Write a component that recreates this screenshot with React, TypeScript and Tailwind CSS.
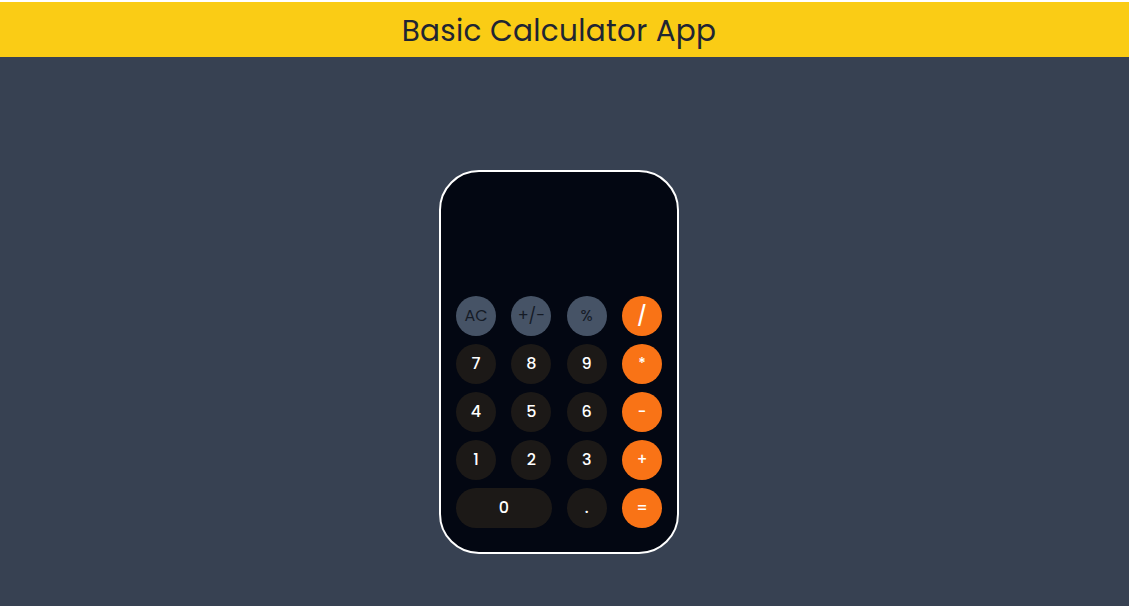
type Key = {
    label: string;
    kind: "fn" | "num" | "op";
    wide?: boolean;
};

const keys: Key[] = [
    { label: "AC", kind: "fn" },
    { label: "+/-", kind: "fn" },
    { label: "%", kind: "fn" },
    { label: "/", kind: "op" },
    { label: "7", kind: "num" },
    { label: "8", kind: "num" },
    { label: "9", kind: "num" },
    { label: "*", kind: "op" },
    { label: "4", kind: "num" },
    { label: "5", kind: "num" },
    { label: "6", kind: "num" },
    { label: "-", kind: "op" },
    { label: "1", kind: "num" },
    { label: "2", kind: "num" },
    { label: "3", kind: "num" },
    { label: "+", kind: "op" },
    { label: "0", kind: "num", wide: true },
    { label: ".", kind: "num" },
    { label: "=", kind: "op" },
];

const kindClass = {
    fn: "bg-[#465366] text-[#151b26] text-base",
    num: "bg-[#1c1917] text-white text-base font-medium",
    op: "bg-[#f97316] text-white text-[15px] font-medium",
};

function CalcKey({ item }: { item: Key }) {
    return (
        <button
            className={`${kindClass[item.kind]} ${item.wide ? "col-span-2 w-[96px]" : "w-10"} h-10 rounded-full flex items-center justify-center ${item.label === "/" ? "text-[20px]" : ""}`}
        >
            {item.label}
        </button>
    );
}

export default function App() {
    return (
        <div className="min-h-[606px] bg-[#374152] font-['Poppins','Lato','Noto_Sans',sans-serif]">
            <header className="mt-[2px] h-[55px] bg-[#facc15] flex items-center justify-center pr-[11px] pt-[3px]">
                <h1 className="text-[29.5px] text-[#1f2533] tracking-[0.3px]">Basic Calculator App</h1>
            </header>
            <main className="flex justify-center pt-[113px] pr-[11px]">
                <div className="w-[240px] h-[384px] rounded-[40px] border-2 border-white bg-[#030712] flex flex-col justify-end px-[15px] pb-[24px]">
                    <div className="grid grid-cols-[40px_40px_40px_40px] justify-between gap-y-2">
                        {keys.map((k) => (
                            <CalcKey key={k.label} item={k} />
                        ))}
                    </div>
                </div>
            </main>
        </div>
    );
}
